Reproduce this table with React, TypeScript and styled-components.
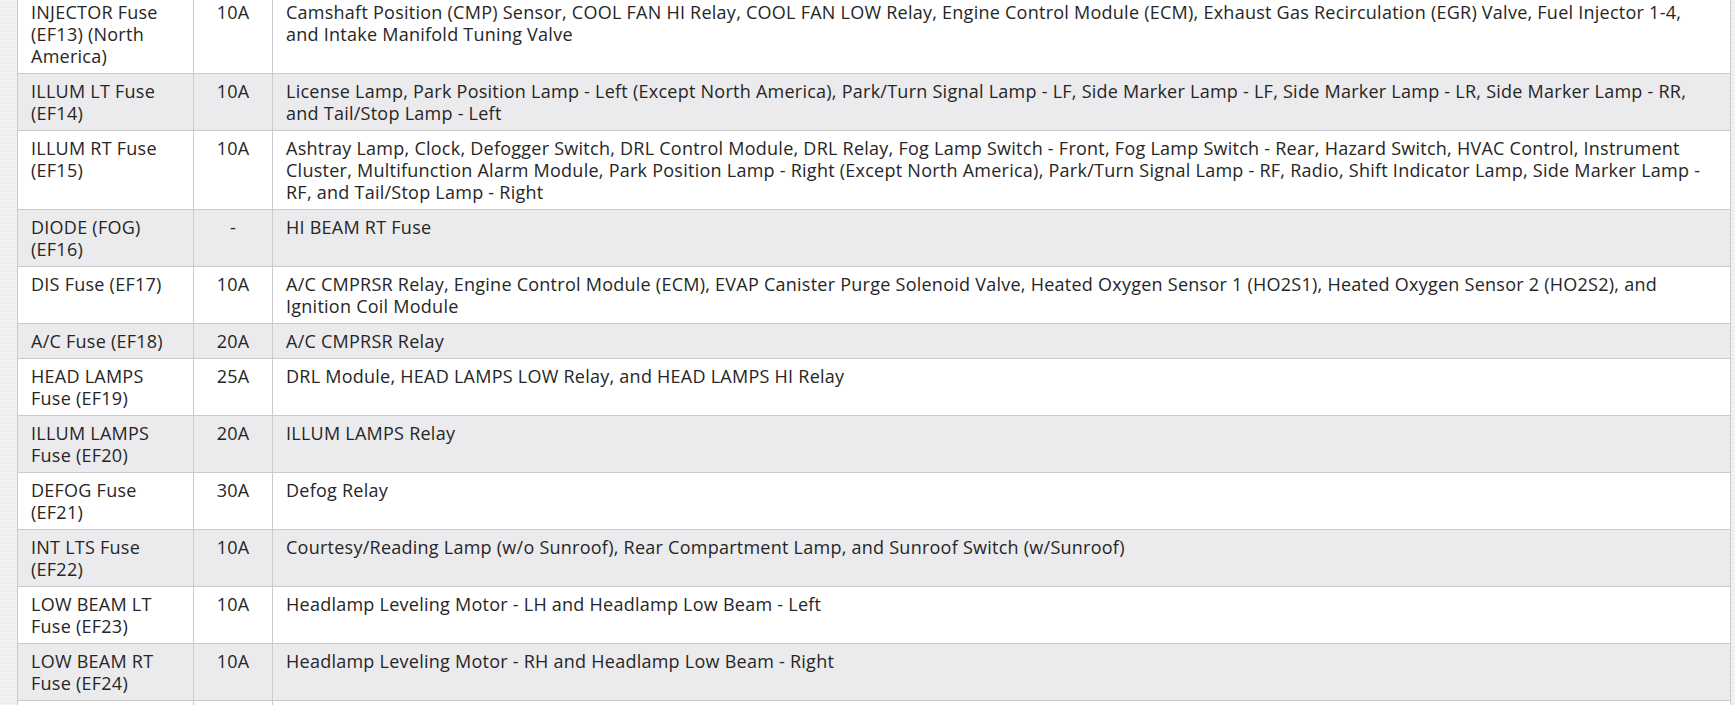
import React from 'react';
import styled, { createGlobalStyle } from 'styled-components';

const GlobalStyle = createGlobalStyle`
  html, body {
    margin: 0;
    padding: 0;
    overflow: hidden;
    background-color: #f3f3f3;
    background-image: repeating-linear-gradient(
      0deg,
      rgba(0, 0, 0, 0.018) 0px,
      rgba(0, 0, 0, 0.018) 2px,
      transparent 2px,
      transparent 4px
    );
  }
`;

const Page = styled.div`
  padding: 0 4px 0 17px;
  margin-top: -6px;
  font-family: 'Open Sans', 'Noto Sans', sans-serif;
  font-size: 18px;
  letter-spacing: 0.25px;
  line-height: 22px;
  color: #262626;
`;

const Table = styled.table`
  width: 100%;
  border-collapse: collapse;
  table-layout: fixed;
`;

const Row = styled.tr<{ shaded?: boolean }>`
  background: ${(p) => (p.shaded ? '#ebebed' : '#ffffff')};
`;

const Cell = styled.td<{ center?: boolean }>`
  border: 1px solid #cbcbcb;
  padding: 6px 13px;
  vertical-align: top;
  text-align: ${(p) => (p.center ? 'center' : 'left')};
`;

type Fuse = { name: string; rating: string; circuits: string };

const fuses: Fuse[] = [
  {
    name: 'INJECTOR Fuse (EF13) (North America)',
    rating: '10A',
    circuits:
      'Camshaft Position (CMP) Sensor, COOL FAN HI Relay, COOL FAN LOW Relay, Engine Control Module (ECM), Exhaust Gas Recirculation (EGR) Valve, Fuel Injector 1-4, and Intake Manifold Tuning Valve',
  },
  {
    name: 'ILLUM LT Fuse (EF14)',
    rating: '10A',
    circuits:
      'License Lamp, Park Position Lamp - Left (Except North America), Park/Turn Signal Lamp - LF, Side Marker Lamp - LF, Side Marker Lamp - LR, Side Marker Lamp - RR, and Tail/Stop Lamp - Left',
  },
  {
    name: 'ILLUM RT Fuse (EF15)',
    rating: '10A',
    circuits:
      'Ashtray Lamp, Clock, Defogger Switch, DRL Control Module, DRL Relay, Fog Lamp Switch - Front, Fog Lamp Switch - Rear, Hazard Switch, HVAC Control, Instrument Cluster, Multifunction Alarm Module, Park Position Lamp - Right (Except North America), Park/Turn Signal Lamp - RF, Radio, Shift Indicator Lamp, Side Marker Lamp - RF, and Tail/Stop Lamp - Right',
  },
  { name: 'DIODE (FOG) (EF16)', rating: '-', circuits: 'HI BEAM RT Fuse' },
  {
    name: 'DIS Fuse (EF17)',
    rating: '10A',
    circuits:
      'A/C CMPRSR Relay, Engine Control Module (ECM), EVAP Canister Purge Solenoid Valve, Heated Oxygen Sensor 1 (HO2S1), Heated Oxygen Sensor 2 (HO2S2), and Ignition Coil Module',
  },
  { name: 'A/C Fuse (EF18)', rating: '20A', circuits: 'A/C CMPRSR Relay' },
  {
    name: 'HEAD LAMPS Fuse (EF19)',
    rating: '25A',
    circuits: 'DRL Module, HEAD LAMPS LOW Relay, and HEAD LAMPS HI Relay',
  },
  { name: 'ILLUM LAMPS Fuse (EF20)', rating: '20A', circuits: 'ILLUM LAMPS Relay' },
  { name: 'DEFOG Fuse (EF21)', rating: '30A', circuits: 'Defog Relay' },
  {
    name: 'INT LTS Fuse (EF22)',
    rating: '10A',
    circuits:
      'Courtesy/Reading Lamp (w/o Sunroof), Rear Compartment Lamp, and Sunroof Switch (w/Sunroof)',
  },
  {
    name: 'LOW BEAM LT Fuse (EF23)',
    rating: '10A',
    circuits: 'Headlamp Leveling Motor - LH and Headlamp Low Beam - Left',
  },
  {
    name: 'LOW BEAM RT Fuse (EF24)',
    rating: '10A',
    circuits: 'Headlamp Leveling Motor - RH and Headlamp Low Beam - Right',
  },
  { name: '\u00a0', rating: '\u00a0', circuits: '\u00a0' },
];

export default function App() {
  return (
    <>
      <GlobalStyle />
      <Page>
        <Table>
          <colgroup>
            <col style={{ width: 176 }} />
            <col style={{ width: 79 }} />
            <col />
          </colgroup>
          <tbody>
            {fuses.map((f, i) => (
              <Row key={i} shaded={i % 2 === 1}>
                <Cell>{f.name}</Cell>
                <Cell center>{f.rating}</Cell>
                <Cell>{f.circuits}</Cell>
              </Row>
            ))}
          </tbody>
        </Table>
      </Page>
    </>
  );
}
